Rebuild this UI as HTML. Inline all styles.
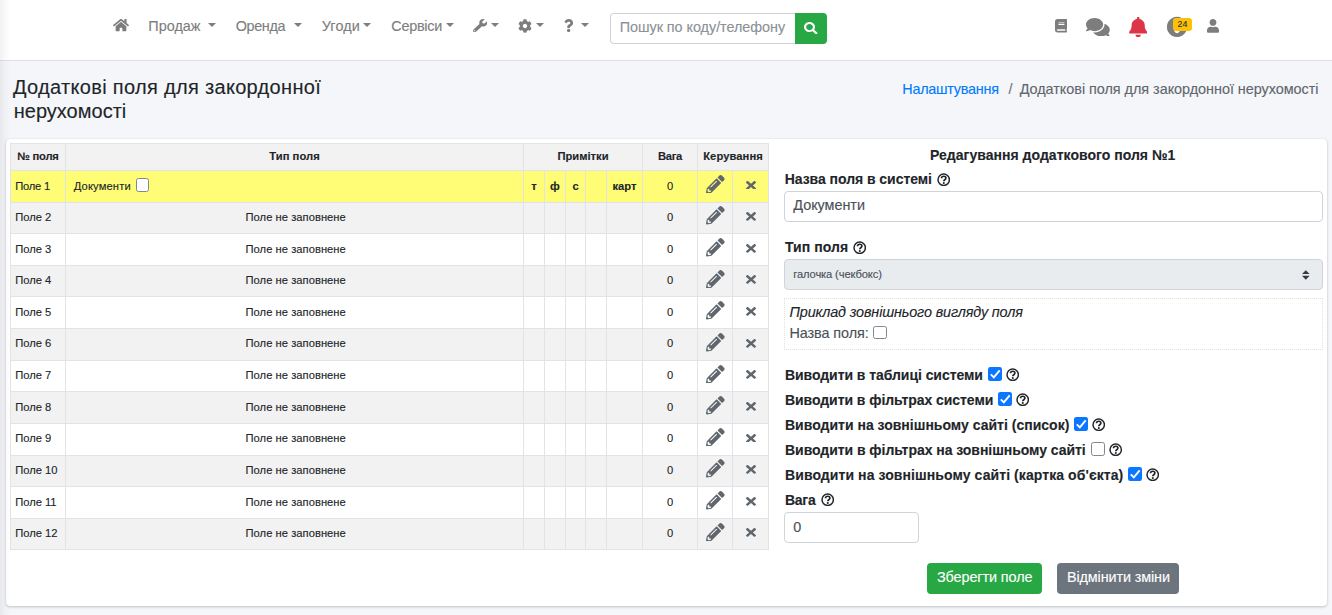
<!DOCTYPE html>
<html lang="uk">
<head>
<meta charset="utf-8">
<title>Додаткові поля для закордонної нерухомості</title>
<style>
*{box-sizing:border-box}
html,body{margin:0;padding:0}
body{width:1332px;height:615px;overflow:hidden;background:#f4f6f9;font-family:"Liberation Sans",Arial,sans-serif;font-size:14.4px;color:#212529;position:relative}
.abs{position:absolute}
.t{position:absolute;white-space:nowrap;color:#212529}
#nav{position:absolute;left:0;top:0;width:1332px;height:61px;background:#fff;border-bottom:1px solid #dee2e6}
#sideshadow{position:absolute;left:0;top:0;width:11px;height:615px;background:linear-gradient(to right,rgba(0,0,0,.055),rgba(0,0,0,.02) 50%,rgba(0,0,0,0));z-index:5}
.caret{position:absolute;width:0;height:0;border-left:4.200px solid transparent;border-right:4.200px solid transparent;margin-left:-.100px;border-top:4.200px solid #7d7d7d;top:23px}
#search{position:absolute;left:610px;top:13px;width:186px;height:31px;border:1px solid #ced4da;border-right:0;border-radius:4px 0 0 4px;background:#fff}
#sbtn{position:absolute;left:795px;top:13px;width:32px;height:31px;background:#28a745;border-radius:0 4px 4px 0}
.badge{left:1173.3px;top:17.9px;width:18.4px;height:12.9px;background:#ffc107;border-radius:3px}
#card{position:absolute;left:6px;top:139px;width:1321px;height:466.500px;background:#fff;border-radius:4px;box-shadow:0 0 1px rgba(0,0,0,.125),0 1px 3px rgba(0,0,0,.2)}
table{position:absolute;left:10px;top:143px;width:759px;border-collapse:collapse;table-layout:fixed;font-size:11.2px;color:#212529}
td,th{border:1px solid #e1e3e6;padding:0;height:31.640px;text-align:center;vertical-align:middle;overflow:hidden;white-space:nowrap;line-height:14px}
th{height:26.900px;background:#f2f2f2;font-weight:700}
tr.odd td{background:#f2f2f2}
tr.sel td{background:#fffd75}
td.l{text-align:left;padding-left:4.500px}
td span{position:relative;top:-.900px;left:1.200px}
td.l span{left:-.300px}
td span.z{left:0}
tr.sel td span{top:-.100px}
tr.sel td span.cb{top:-1px;left:.500px}
th span{position:relative;top:-.900px}
td.b{font-weight:700}
.cb{display:inline-block;width:13.400px;height:13.800px;border:1px solid #85858f;border-radius:2.500px;background:#fff;vertical-align:-2.300px;margin-left:4.500px;position:relative;top:-.800px}
.pc{display:block;margin:0 auto;position:relative;top:-2.100px;left:.300px}
.xc{display:block;margin:0 auto;position:relative;top:-1.200px}
.ckoff{border:1px solid #85858f;border-radius:2.500px;background:#fff}
.inp{position:absolute;left:784px;height:31px;border:1px solid #ced4da;border-radius:4px;background:#fff}
.dotted{left:784px;top:298px;width:539px;height:52px;border:1px dotted #e0e0e0}
.btn{position:absolute;top:563px;height:31px;border-radius:4px}
body{-webkit-text-stroke:.12px}
</style>
</head>
<body>
<div id="sideshadow"></div>
<div id="nav"></div>
<svg class="abs" style="left:113px;top:17.8px" width="16" height="14.2" viewBox="0 0 576 512" preserveAspectRatio="none"><path fill="#7d7d7d" d="M280.37 148.26L96 300.11V464a16 16 0 0 0 16 16l112.06-.29a16 16 0 0 0 15.92-16V368a16 16 0 0 1 16-16h64a16 16 0 0 1 16 16v95.64a16 16 0 0 0 16 16.05L464 480a16 16 0 0 0 16-16V300L295.67 148.26a12.19 12.19 0 0 0-15.3 0zM571.6 251.47L488 182.56V44.05a12 12 0 0 0-12-12h-56a12 12 0 0 0-12 12v72.61L318.47 43a48 48 0 0 0-61 0L4.34 251.47a12 12 0 0 0-1.6 16.9l25.5 31A12 12 0 0 0 45.15 301l235.22-193.74a12.19 12.19 0 0 1 15.3 0L530.9 301a12 12 0 0 0 16.9-1.6l25.5-31a12 12 0 0 0-1.7-16.93z"/></svg><span class="t" style="left:148.3px;top:15.81px;font-size:14.4px;line-height:20px;letter-spacing:0.021px;color:#7d7d7d;">Продаж</span><i class="caret" style="left:208.3px"></i><span class="t" style="left:235.8px;top:15.81px;font-size:14.4px;line-height:20px;letter-spacing:-0.376px;color:#7d7d7d;">Оренда</span><i class="caret" style="left:293.7px"></i><span class="t" style="left:321.8px;top:15.81px;font-size:14.4px;line-height:20px;letter-spacing:0.081px;color:#7d7d7d;">Угоди</span><i class="caret" style="left:363.5px"></i><span class="t" style="left:391.3px;top:15.81px;font-size:14.4px;line-height:20px;letter-spacing:-0.268px;color:#7d7d7d;">Сервіси</span><i class="caret" style="left:446.5px"></i><svg class="abs" style="left:473px;top:19.2px" width="14.2" height="13.3" viewBox="0 0 512 512" preserveAspectRatio="none"><path fill="#7d7d7d" d="M507.73 109.1c-2.24-9.03-13.54-12.09-20.12-5.51l-74.36 74.36-67.88-11.31-11.31-67.88 74.36-74.36c6.62-6.62 3.43-17.9-5.66-20.16-47.38-11.74-99.55.91-136.58 37.93-39.64 39.64-50.55 97.1-34.05 147.2L18.74 402.76c-24.99 24.99-24.99 65.51 0 90.5 24.99 24.99 65.51 24.99 90.5 0l213.21-213.21c50.12 16.71 107.47 5.68 147.37-34.22 37.07-37.07 49.7-89.32 37.91-136.73zM64 472c-13.25 0-24-10.75-24-24 0-13.26 10.75-24 24-24s24 10.74 24 24c0 13.25-10.75 24-24 24z"/></svg><i class="caret" style="left:491.1px"></i><svg class="abs" style="left:518px;top:18.9px" width="14" height="14" viewBox="0 0 512 512" preserveAspectRatio="none"><path fill="#7d7d7d" d="M487.4 315.7l-42.6-24.6c4.3-23.2 4.3-47 0-70.2l42.6-24.6c4.9-2.8 7.1-8.6 5.5-14-11.1-35.6-30-67.8-54.7-94.6-3.8-4.1-10-5.1-14.8-2.3L380.8 110c-17.9-15.400-38.500-27.300-60.800-35.100V25.800c0-5.600-3.900-10.500-9.400-11.700-36.700-8.200-74.300-7.800-109.200 0-5.500 1.200-9.400 6.100-9.400 11.700V75c-22.200 7.900-42.800 19.800-60.800 35.100L88.700 85.500c-4.900-2.800-11-1.900-14.800 2.300-24.700 26.700-43.600 58.900-54.700 94.600-1.700 5.400.6 11.200 5.500 14L67.300 221c-4.300 23.200-4.300 47 0 70.200l-42.600 24.600c-4.900 2.800-7.100 8.600-5.500 14 11.100 35.600 30 67.800 54.700 94.600 3.800 4.100 10 5.100 14.800 2.300l42.600-24.600c17.900 15.400 38.500 27.300 60.800 35.100v49.200c0 5.600 3.900 10.500 9.400 11.700 36.700 8.200 74.300 7.800 109.200 0 5.500-1.200 9.400-6.100 9.400-11.700v-49.200c22.200-7.900 42.800-19.800 60.800-35.100l42.600 24.600c4.900 2.800 11 1.900 14.800-2.300 24.700-26.700 43.600-58.900 54.700-94.600 1.500-5.500-.7-11.300-5.600-14.100zM256 336c-44.100 0-80-35.900-80-80s35.900-80 80-80 80 35.900 80 80-35.900 80-80 80z"/></svg><i class="caret" style="left:535.9px"></i><svg class="abs" style="left:563.7px;top:19.2px" width="9.3" height="13.3" viewBox="0 0 384 512" preserveAspectRatio="none"><path fill="#7d7d7d" d="M202.021 0C122.202 0 70.503 32.703 29.914 91.026c-7.363 10.58-5.093 25.086 5.178 32.874l43.138 32.709c10.373 7.865 25.132 6.026 33.253-4.148 25.049-31.381 43.630-49.449 82.757-49.449 30.764 0 68.816 19.799 68.816 49.631 0 22.552-18.617 34.134-48.993 51.164-35.423 19.860-82.299 44.576-82.299 106.405V320c0 13.255 10.745 24 24 24h72.471c13.255 0 24-10.745 24-24v-5.773c0-42.860 125.268-44.645 125.268-160.627C377.504 66.256 286.902 0 202.021 0zM192 373.459c-38.196 0-69.271 31.075-69.271 69.271 0 38.195 31.075 69.270 69.271 69.270s69.271-31.075 69.271-69.271-31.075-69.270-69.271-69.270z"/></svg><i class="caret" style="left:581.3px"></i><div id="search"></div><span class="t" style="left:619.7px;top:17.01px;font-size:14.4px;line-height:20px;letter-spacing:-0.036px;color:#8b9197;">Пошук по коду/телефону</span><div id="sbtn"></div><svg class="abs" style="left:804.2px;top:21.5px" width="13.6" height="12.4" viewBox="0 0 512 512" preserveAspectRatio="none"><path fill="#fff" d="M505 442.7L405.3 343c-4.5-4.5-10.600-7-17-7H372c27.600-35.300 44-79.700 44-128C416 93.100 322.900 0 208 0S0 93.100 0 208s93.100 208 208 208c48.300 0 92.700-16.400 128-44v16.300c0 6.400 2.500 12.500 7 17l99.700 99.700c9.400 9.400 24.600 9.400 33.900 0l28.300-28.300c9.400-9.400 9.400-24.600.1-34zM208 336c-70.700 0-128-57.200-128-128 0-70.700 57.200-128 128-128 70.700 0 128 57.200 128 128 0 70.700-57.200 128-128 128z"/></svg><svg class="abs" style="left:1054.8px;top:19px" width="12" height="13.5" viewBox="0 0 448 512" preserveAspectRatio="none"><path fill="#7d7d7d" d="M448 360V24c0-13.300-10.700-24-24-24H96C43 0 0 43 0 96v320c0 53 43 96 96 96h328c13.300 0 24-10.700 24-24v-16c0-7.500-3.500-14.300-8.900-18.700-4.200-15.400-4.200-59.300 0-74.700 5.400-4.300 8.900-11.100 8.900-18.600zM128 134c0-3.300 2.700-6 6-6h212c3.300 0 6 2.700 6 6v20c0 3.300-2.700 6-6 6H134c-3.300 0-6-2.700-6-6v-20zm0 64c0-3.300 2.700-6 6-6h212c3.300 0 6 2.700 6 6v20c0 3.300-2.700 6-6 6H134c-3.300 0-6-2.700-6-6v-20zm253.400 250H96c-17.700 0-32-14.300-32-32 0-17.600 14.400-32 32-32h285.400c-1.900 17.100-1.900 46.900 0 64z"/></svg><svg class="abs" style="left:1085.8px;top:17.9px" width="23.8" height="18.4" viewBox="0 32 576 448" preserveAspectRatio="none"><path fill="#7d7d7d" d="M416 192c0-88.400-93.100-160-208-160S0 103.600 0 192c0 34.300 14.100 65.900 38 92-13.400 30.200-35.500 54.200-35.800 54.500-2.200 2.300-2.800 5.700-1.500 8.700S4.800 352 8 352c36.600 0 66.900-12.300 88.700-25 32.200 15.700 70.300 25 111.300 25 114.900 0 208-71.600 208-160zm122 220c23.900-26 38-57.700 38-92 0-66.900-53.500-124.200-129.300-148.100.9 6.600 1.300 13.300 1.300 20.100 0 105.900-107.700 192-240 192-10.800 0-21.300-.8-31.700-1.900C207.800 439.600 281.800 480 368 480c41 0 79.100-9.200 111.300-25 21.800 12.700 52.100 25 88.700 25 3.200 0 6.100-1.900 7.300-4.800 1.300-2.900.7-6.300-1.500-8.700-.3-.3-22.400-24.200-35.800-54.500z"/></svg><svg class="abs" style="left:1128.75px;top:16.7px" width="18.35" height="20.4" viewBox="0 0 448 512" preserveAspectRatio="none"><path fill="#dc3545" d="M224 512c35.320 0 63.970-28.650 63.970-64H160.030c0 35.350 28.650 64 63.970 64zm215.390-149.710c-19.320-20.760-55.470-51.990-55.470-154.290 0-77.700-54.480-139.900-127.940-155.160V32c0-17.670-14.320-32-31.980-32s-31.980 14.330-31.980 32v20.840C118.560 68.100 64.080 130.300 64.080 208c0 102.300-36.150 133.530-55.470 154.290-6 6.450-8.660 14.160-8.610 21.710.11 16.400 12.980 32 32.100 32h383.800c19.120 0 32-15.600 32.100-32 .05-7.550-2.610-15.270-8.610-21.710z"/></svg><svg class="abs" style="left:1166px;top:16px" width="22" height="22" viewBox="0 0 22 22"><path fill="#7d7d7d" fill-rule="evenodd" d="M11 .8a10.100 10.100 0 1 0 .001 0zM11 11.800a2.700 2.700 0 1 0 .001 0z"/></svg><span class="abs badge"></span><span class="t" style="left:1177.5px;top:13.75px;font-size:8.8px;line-height:20px;color:#1f2d3d;">24</span><svg class="abs" style="left:1207px;top:19px" width="12" height="13.7" viewBox="0 0 448 512" preserveAspectRatio="none"><path fill="#7d7d7d" d="M224 256c70.700 0 128-57.300 128-128S294.700 0 224 0 96 57.300 96 128s57.300 128 128 128zm89.600 32h-16.700c-22.200 10.200-46.900 16-72.900 16s-50.600-5.800-72.900-16h-16.700C60.200 288 0 348.200 0 422.400V464c0 26.500 21.500 48 48 48h352c26.500 0 48-21.500 48-48v-41.600c0-74.200-60.200-134.400-134.400-134.400z"/></svg>
<span class="t" style="left:13px;top:74.82px;font-size:20px;line-height:24px;letter-spacing:0.315px;">Додаткові поля для закордонної</span><span class="t" style="left:13.75px;top:99.07px;font-size:20px;line-height:24px;letter-spacing:0.006px;">нерухомості</span>
<span class="t" style="left:902.3px;top:79.31px;font-size:14.4px;line-height:20px;letter-spacing:-0.257px;color:#007bff;">Налаштування</span><span class="t" style="left:1008.4px;top:79.31px;font-size:14.4px;line-height:20px;color:#6c757d;">/</span><span class="t" style="left:1019.7px;top:79.31px;font-size:14.4px;line-height:20px;letter-spacing:-0.023px;color:#60666c;">Додаткові поля для закордонної нерухомості</span>
<div id="card"></div>
<table>
<colgroup><col style="width:55px"><col style="width:458px"><col style="width:21px"><col style="width:21px"><col style="width:20px"><col style="width:21px"><col style="width:36px"><col style="width:55px"><col style="width:35px"><col style="width:36px"></colgroup>
<tr><th><span style="letter-spacing:-0.195px">№ поля</span></th><th><span style="letter-spacing:0.049px">Тип поля</span></th><th colspan="5"><span style="letter-spacing:-0.007px">Примітки</span></th><th><span style="letter-spacing:-0.27px">Вага</span></th><th colspan="2"><span style="letter-spacing:0.073px">Керування</span></th></tr>
<tr class="sel"><td class="l"><span style="letter-spacing:-0.228px">Поле 1</span></td><td class="l" style="padding-left:8px"><span style="letter-spacing:0.132px">Документи</span><span class="cb"></span></td><td class="b">т</td><td class="b">ф</td><td class="b">с</td><td></td><td class="b">карт</td><td><span class="z">0</span></td><td><svg class="pc" width="18.600" height="18.600" viewBox="0 0 512 512"><path fill="#60666d" d="M497.9 142.1l-46.1 46.1c-4.700 4.700-12.300 4.700-17 0l-111-111c-4.700-4.700-4.700-12.300 0-17l46.100-46.100c18.700-18.700 49.100-18.700 67.900 0l60.100 60.100c18.800 18.700 18.800 49.100 0 67.900zM284.200 99.800L21.600 362.400.4 483.900c-2.900 16.400 11.400 30.600 27.800 27.800l121.500-21.300 262.600-262.600c4.700-4.700 4.700-12.300 0-17l-111-111c-4.800-4.700-12.400-4.700-17.100 0zM124.100 339.900c-5.500-5.500-5.500-14.300 0-19.800l154-154c5.500-5.500 14.300-5.500 19.800 0s5.500 14.300 0 19.800l-154 154c-5.500 5.500-14.300 5.500-19.800 0zM88 424h48v36.300l-64.500 11.300-31.100-31.100L51.700 376H88v48z"/></svg></td><td><svg class="xc" width="10" height="8.800" viewBox="0 0 352 352" preserveAspectRatio="none"><path fill="#60666d" d="M242.720 176l100.070-100.070c12.280-12.280 12.280-32.190 0-44.480l-22.240-22.240c-12.280-12.280-32.190-12.280-44.480 0L176 109.280 75.930 9.210c-12.280-12.280-32.190-12.280-44.480 0L9.210 31.450c-12.280 12.280-12.280 32.190 0 44.480L109.280 176 9.210 276.070c-12.280 12.280-12.280 32.190 0 44.480l22.240 22.240c12.280 12.280 32.200 12.280 44.480 0L176 242.720l100.070 100.070c12.280 12.280 32.200 12.280 44.480 0l22.240-22.240c12.280-12.280 12.280-32.190 0-44.480L242.720 176z"/></svg></td></tr>
<tr class="odd"><td class="l"><span style="letter-spacing:-0.028px">Поле 2</span></td><td><span style="letter-spacing:0.033px">Поле не заповнене</span></td><td></td><td></td><td></td><td></td><td></td><td><span class="z">0</span></td><td><svg class="pc" width="18.600" height="18.600" viewBox="0 0 512 512"><path fill="#60666d" d="M497.9 142.1l-46.1 46.1c-4.700 4.700-12.300 4.700-17 0l-111-111c-4.700-4.700-4.700-12.300 0-17l46.100-46.100c18.700-18.700 49.100-18.700 67.900 0l60.100 60.100c18.800 18.700 18.800 49.100 0 67.900zM284.200 99.800L21.600 362.400.4 483.900c-2.900 16.400 11.400 30.600 27.800 27.800l121.500-21.300 262.600-262.600c4.700-4.700 4.700-12.300 0-17l-111-111c-4.800-4.700-12.400-4.700-17.100 0zM124.100 339.900c-5.500-5.500-5.500-14.300 0-19.800l154-154c5.500-5.500 14.300-5.500 19.800 0s5.500 14.300 0 19.800l-154 154c-5.500 5.500-14.300 5.500-19.800 0zM88 424h48v36.300l-64.500 11.300-31.100-31.100L51.700 376H88v48z"/></svg></td><td><svg class="xc" width="10" height="8.800" viewBox="0 0 352 352" preserveAspectRatio="none"><path fill="#60666d" d="M242.720 176l100.070-100.070c12.280-12.280 12.280-32.190 0-44.480l-22.240-22.240c-12.280-12.280-32.190-12.280-44.480 0L176 109.280 75.930 9.210c-12.280-12.280-32.190-12.280-44.480 0L9.210 31.450c-12.280 12.280-12.280 32.190 0 44.480L109.280 176 9.210 276.070c-12.280 12.280-12.280 32.190 0 44.480l22.240 22.240c12.280 12.280 32.200 12.280 44.480 0L176 242.720l100.070 100.070c12.280 12.280 32.200 12.280 44.480 0l22.240-22.240c12.280-12.280 12.280-32.190 0-44.480L242.720 176z"/></svg></td></tr>
<tr class=""><td class="l"><span style="letter-spacing:-0.028px">Поле 3</span></td><td><span style="letter-spacing:0.033px">Поле не заповнене</span></td><td></td><td></td><td></td><td></td><td></td><td><span class="z">0</span></td><td><svg class="pc" width="18.600" height="18.600" viewBox="0 0 512 512"><path fill="#60666d" d="M497.9 142.1l-46.1 46.1c-4.700 4.700-12.300 4.700-17 0l-111-111c-4.700-4.700-4.700-12.300 0-17l46.100-46.100c18.700-18.700 49.100-18.700 67.900 0l60.100 60.100c18.800 18.700 18.800 49.100 0 67.900zM284.200 99.800L21.600 362.400.4 483.900c-2.900 16.400 11.400 30.600 27.800 27.800l121.500-21.300 262.600-262.600c4.700-4.700 4.700-12.300 0-17l-111-111c-4.800-4.700-12.400-4.700-17.100 0zM124.100 339.900c-5.500-5.500-5.500-14.300 0-19.800l154-154c5.500-5.500 14.300-5.500 19.800 0s5.500 14.300 0 19.800l-154 154c-5.500 5.500-14.300 5.500-19.800 0zM88 424h48v36.300l-64.500 11.300-31.100-31.100L51.700 376H88v48z"/></svg></td><td><svg class="xc" width="10" height="8.800" viewBox="0 0 352 352" preserveAspectRatio="none"><path fill="#60666d" d="M242.720 176l100.070-100.070c12.280-12.280 12.280-32.190 0-44.480l-22.240-22.240c-12.280-12.280-32.190-12.280-44.480 0L176 109.280 75.930 9.210c-12.280-12.280-32.190-12.280-44.480 0L9.210 31.450c-12.280 12.280-12.280 32.190 0 44.480L109.280 176 9.210 276.070c-12.280 12.280-12.280 32.190 0 44.480l22.240 22.240c12.280 12.280 32.200 12.280 44.480 0L176 242.720l100.070 100.070c12.280 12.280 32.200 12.280 44.480 0l22.240-22.240c12.280-12.280 12.280-32.190 0-44.480L242.720 176z"/></svg></td></tr>
<tr class="odd"><td class="l"><span style="letter-spacing:-0.028px">Поле 4</span></td><td><span style="letter-spacing:0.033px">Поле не заповнене</span></td><td></td><td></td><td></td><td></td><td></td><td><span class="z">0</span></td><td><svg class="pc" width="18.600" height="18.600" viewBox="0 0 512 512"><path fill="#60666d" d="M497.9 142.1l-46.1 46.1c-4.700 4.700-12.300 4.700-17 0l-111-111c-4.700-4.700-4.700-12.300 0-17l46.100-46.100c18.700-18.700 49.100-18.700 67.900 0l60.100 60.100c18.800 18.700 18.800 49.100 0 67.900zM284.200 99.800L21.600 362.400.4 483.900c-2.900 16.400 11.400 30.600 27.800 27.800l121.500-21.300 262.600-262.600c4.700-4.700 4.700-12.300 0-17l-111-111c-4.800-4.700-12.400-4.700-17.100 0zM124.100 339.900c-5.500-5.500-5.500-14.300 0-19.800l154-154c5.500-5.500 14.300-5.500 19.800 0s5.500 14.300 0 19.800l-154 154c-5.500 5.500-14.300 5.500-19.800 0zM88 424h48v36.300l-64.500 11.300-31.100-31.100L51.700 376H88v48z"/></svg></td><td><svg class="xc" width="10" height="8.800" viewBox="0 0 352 352" preserveAspectRatio="none"><path fill="#60666d" d="M242.720 176l100.070-100.070c12.280-12.280 12.280-32.190 0-44.480l-22.240-22.240c-12.280-12.280-32.190-12.280-44.480 0L176 109.280 75.930 9.210c-12.280-12.280-32.190-12.280-44.480 0L9.210 31.450c-12.280 12.280-12.280 32.190 0 44.480L109.280 176 9.210 276.070c-12.280 12.280-12.280 32.190 0 44.480l22.240 22.240c12.280 12.280 32.200 12.280 44.480 0L176 242.720l100.070 100.070c12.280 12.280 32.200 12.280 44.480 0l22.240-22.240c12.280-12.280 12.280-32.190 0-44.480L242.720 176z"/></svg></td></tr>
<tr class=""><td class="l"><span style="letter-spacing:-0.028px">Поле 5</span></td><td><span style="letter-spacing:0.033px">Поле не заповнене</span></td><td></td><td></td><td></td><td></td><td></td><td><span class="z">0</span></td><td><svg class="pc" width="18.600" height="18.600" viewBox="0 0 512 512"><path fill="#60666d" d="M497.9 142.1l-46.1 46.1c-4.700 4.700-12.300 4.700-17 0l-111-111c-4.700-4.700-4.700-12.300 0-17l46.100-46.100c18.700-18.700 49.100-18.700 67.900 0l60.100 60.100c18.800 18.700 18.800 49.100 0 67.900zM284.200 99.800L21.600 362.400.4 483.900c-2.900 16.400 11.400 30.600 27.800 27.800l121.500-21.300 262.600-262.600c4.700-4.700 4.700-12.300 0-17l-111-111c-4.800-4.700-12.400-4.700-17.100 0zM124.100 339.900c-5.500-5.500-5.500-14.300 0-19.800l154-154c5.500-5.500 14.300-5.500 19.800 0s5.500 14.300 0 19.800l-154 154c-5.500 5.500-14.300 5.500-19.800 0zM88 424h48v36.300l-64.500 11.300-31.100-31.100L51.700 376H88v48z"/></svg></td><td><svg class="xc" width="10" height="8.800" viewBox="0 0 352 352" preserveAspectRatio="none"><path fill="#60666d" d="M242.720 176l100.070-100.070c12.280-12.280 12.280-32.190 0-44.480l-22.240-22.240c-12.280-12.280-32.190-12.280-44.480 0L176 109.280 75.930 9.210c-12.280-12.280-32.190-12.280-44.480 0L9.210 31.450c-12.280 12.280-12.280 32.190 0 44.480L109.280 176 9.210 276.070c-12.280 12.280-12.280 32.190 0 44.480l22.240 22.240c12.280 12.280 32.200 12.280 44.480 0L176 242.720l100.070 100.070c12.280 12.280 32.200 12.280 44.480 0l22.240-22.240c12.280-12.280 12.280-32.190 0-44.480L242.720 176z"/></svg></td></tr>
<tr class="odd"><td class="l"><span style="letter-spacing:-0.028px">Поле 6</span></td><td><span style="letter-spacing:0.033px">Поле не заповнене</span></td><td></td><td></td><td></td><td></td><td></td><td><span class="z">0</span></td><td><svg class="pc" width="18.600" height="18.600" viewBox="0 0 512 512"><path fill="#60666d" d="M497.9 142.1l-46.1 46.1c-4.700 4.700-12.300 4.700-17 0l-111-111c-4.700-4.700-4.700-12.300 0-17l46.100-46.100c18.700-18.700 49.100-18.700 67.900 0l60.100 60.100c18.800 18.700 18.800 49.100 0 67.900zM284.200 99.800L21.600 362.400.4 483.900c-2.900 16.400 11.400 30.600 27.800 27.800l121.500-21.300 262.600-262.600c4.700-4.700 4.700-12.300 0-17l-111-111c-4.800-4.700-12.400-4.700-17.100 0zM124.100 339.900c-5.500-5.500-5.500-14.300 0-19.800l154-154c5.500-5.500 14.300-5.500 19.800 0s5.500 14.300 0 19.800l-154 154c-5.500 5.500-14.300 5.500-19.800 0zM88 424h48v36.300l-64.500 11.300-31.100-31.100L51.700 376H88v48z"/></svg></td><td><svg class="xc" width="10" height="8.800" viewBox="0 0 352 352" preserveAspectRatio="none"><path fill="#60666d" d="M242.720 176l100.070-100.070c12.280-12.280 12.280-32.190 0-44.480l-22.240-22.240c-12.280-12.280-32.190-12.280-44.480 0L176 109.280 75.930 9.210c-12.280-12.280-32.190-12.280-44.480 0L9.210 31.450c-12.280 12.280-12.280 32.190 0 44.480L109.280 176 9.210 276.070c-12.280 12.280-12.280 32.190 0 44.480l22.240 22.240c12.280 12.280 32.200 12.280 44.480 0L176 242.720l100.070 100.070c12.280 12.280 32.200 12.280 44.480 0l22.240-22.240c12.280-12.280 12.280-32.190 0-44.480L242.720 176z"/></svg></td></tr>
<tr class=""><td class="l"><span style="letter-spacing:-0.028px">Поле 7</span></td><td><span style="letter-spacing:0.033px">Поле не заповнене</span></td><td></td><td></td><td></td><td></td><td></td><td><span class="z">0</span></td><td><svg class="pc" width="18.600" height="18.600" viewBox="0 0 512 512"><path fill="#60666d" d="M497.9 142.1l-46.1 46.1c-4.700 4.700-12.300 4.700-17 0l-111-111c-4.700-4.700-4.700-12.300 0-17l46.100-46.100c18.700-18.700 49.100-18.700 67.900 0l60.100 60.100c18.800 18.700 18.800 49.100 0 67.900zM284.200 99.800L21.600 362.400.4 483.900c-2.900 16.400 11.400 30.600 27.800 27.800l121.500-21.300 262.600-262.600c4.700-4.700 4.700-12.300 0-17l-111-111c-4.800-4.700-12.400-4.700-17.100 0zM124.100 339.900c-5.500-5.500-5.500-14.300 0-19.800l154-154c5.500-5.500 14.300-5.500 19.800 0s5.500 14.300 0 19.800l-154 154c-5.500 5.500-14.300 5.500-19.800 0zM88 424h48v36.300l-64.500 11.300-31.100-31.100L51.700 376H88v48z"/></svg></td><td><svg class="xc" width="10" height="8.800" viewBox="0 0 352 352" preserveAspectRatio="none"><path fill="#60666d" d="M242.720 176l100.070-100.070c12.280-12.280 12.280-32.190 0-44.480l-22.240-22.240c-12.280-12.280-32.190-12.280-44.480 0L176 109.280 75.930 9.210c-12.280-12.280-32.190-12.280-44.480 0L9.210 31.450c-12.280 12.280-12.280 32.190 0 44.480L109.280 176 9.210 276.070c-12.280 12.280-12.280 32.190 0 44.480l22.240 22.240c12.280 12.280 32.200 12.280 44.480 0L176 242.720l100.070 100.070c12.280 12.280 32.200 12.280 44.480 0l22.240-22.240c12.280-12.280 12.280-32.190 0-44.480L242.720 176z"/></svg></td></tr>
<tr class="odd"><td class="l"><span style="letter-spacing:-0.028px">Поле 8</span></td><td><span style="letter-spacing:0.033px">Поле не заповнене</span></td><td></td><td></td><td></td><td></td><td></td><td><span class="z">0</span></td><td><svg class="pc" width="18.600" height="18.600" viewBox="0 0 512 512"><path fill="#60666d" d="M497.9 142.1l-46.1 46.1c-4.700 4.700-12.300 4.700-17 0l-111-111c-4.700-4.700-4.700-12.300 0-17l46.100-46.100c18.700-18.700 49.100-18.700 67.900 0l60.100 60.100c18.800 18.700 18.800 49.100 0 67.900zM284.200 99.800L21.600 362.400.4 483.900c-2.900 16.400 11.400 30.600 27.800 27.800l121.500-21.300 262.600-262.600c4.700-4.700 4.700-12.300 0-17l-111-111c-4.800-4.700-12.400-4.700-17.100 0zM124.100 339.900c-5.500-5.500-5.500-14.300 0-19.800l154-154c5.500-5.500 14.300-5.500 19.800 0s5.500 14.300 0 19.800l-154 154c-5.500 5.500-14.300 5.500-19.800 0zM88 424h48v36.300l-64.500 11.300-31.100-31.100L51.700 376H88v48z"/></svg></td><td><svg class="xc" width="10" height="8.800" viewBox="0 0 352 352" preserveAspectRatio="none"><path fill="#60666d" d="M242.720 176l100.070-100.070c12.280-12.280 12.280-32.190 0-44.480l-22.240-22.240c-12.280-12.280-32.190-12.280-44.480 0L176 109.280 75.930 9.210c-12.280-12.280-32.190-12.280-44.480 0L9.210 31.450c-12.280 12.280-12.280 32.190 0 44.480L109.280 176 9.210 276.070c-12.280 12.280-12.280 32.190 0 44.480l22.240 22.240c12.280 12.280 32.200 12.280 44.480 0L176 242.720l100.070 100.070c12.280 12.280 32.200 12.280 44.480 0l22.240-22.240c12.280-12.280 12.280-32.190 0-44.480L242.720 176z"/></svg></td></tr>
<tr class=""><td class="l"><span style="letter-spacing:-0.028px">Поле 9</span></td><td><span style="letter-spacing:0.033px">Поле не заповнене</span></td><td></td><td></td><td></td><td></td><td></td><td><span class="z">0</span></td><td><svg class="pc" width="18.600" height="18.600" viewBox="0 0 512 512"><path fill="#60666d" d="M497.9 142.1l-46.1 46.1c-4.700 4.700-12.300 4.700-17 0l-111-111c-4.700-4.700-4.700-12.300 0-17l46.100-46.100c18.700-18.700 49.100-18.700 67.900 0l60.100 60.100c18.800 18.700 18.800 49.100 0 67.900zM284.200 99.800L21.600 362.400.4 483.900c-2.900 16.400 11.400 30.600 27.800 27.800l121.500-21.300 262.600-262.600c4.700-4.700 4.700-12.300 0-17l-111-111c-4.800-4.700-12.400-4.700-17.100 0zM124.100 339.900c-5.500-5.500-5.500-14.300 0-19.800l154-154c5.500-5.500 14.300-5.500 19.800 0s5.500 14.300 0 19.800l-154 154c-5.500 5.500-14.300 5.500-19.800 0zM88 424h48v36.300l-64.500 11.300-31.100-31.100L51.700 376H88v48z"/></svg></td><td><svg class="xc" width="10" height="8.800" viewBox="0 0 352 352" preserveAspectRatio="none"><path fill="#60666d" d="M242.720 176l100.070-100.070c12.280-12.280 12.280-32.190 0-44.480l-22.240-22.240c-12.280-12.280-32.190-12.280-44.480 0L176 109.280 75.930 9.210c-12.280-12.280-32.190-12.280-44.480 0L9.210 31.450c-12.280 12.280-12.280 32.190 0 44.480L109.280 176 9.210 276.070c-12.280 12.280-12.280 32.190 0 44.480l22.240 22.240c12.280 12.280 32.200 12.280 44.480 0L176 242.720l100.070 100.070c12.280 12.280 32.200 12.280 44.480 0l22.240-22.240c12.280-12.280 12.280-32.190 0-44.480L242.720 176z"/></svg></td></tr>
<tr class="odd"><td class="l"><span style="letter-spacing:-0.028px">Поле 10</span></td><td><span style="letter-spacing:0.033px">Поле не заповнене</span></td><td></td><td></td><td></td><td></td><td></td><td><span class="z">0</span></td><td><svg class="pc" width="18.600" height="18.600" viewBox="0 0 512 512"><path fill="#60666d" d="M497.9 142.1l-46.1 46.1c-4.700 4.700-12.300 4.700-17 0l-111-111c-4.700-4.700-4.700-12.300 0-17l46.100-46.100c18.700-18.700 49.100-18.700 67.900 0l60.100 60.100c18.800 18.700 18.800 49.100 0 67.900zM284.200 99.800L21.600 362.400.4 483.900c-2.900 16.400 11.400 30.600 27.800 27.800l121.500-21.300 262.600-262.600c4.700-4.700 4.700-12.300 0-17l-111-111c-4.800-4.700-12.400-4.700-17.100 0zM124.100 339.900c-5.500-5.500-5.500-14.300 0-19.800l154-154c5.500-5.500 14.300-5.500 19.800 0s5.500 14.300 0 19.800l-154 154c-5.500 5.500-14.300 5.500-19.800 0zM88 424h48v36.300l-64.500 11.300-31.100-31.100L51.700 376H88v48z"/></svg></td><td><svg class="xc" width="10" height="8.800" viewBox="0 0 352 352" preserveAspectRatio="none"><path fill="#60666d" d="M242.720 176l100.070-100.070c12.280-12.280 12.280-32.190 0-44.480l-22.240-22.240c-12.280-12.280-32.190-12.280-44.480 0L176 109.280 75.930 9.210c-12.280-12.280-32.190-12.280-44.480 0L9.210 31.450c-12.280 12.280-12.280 32.190 0 44.480L109.280 176 9.210 276.070c-12.280 12.280-12.280 32.190 0 44.480l22.240 22.240c12.280 12.280 32.200 12.280 44.480 0L176 242.720l100.070 100.070c12.280 12.280 32.200 12.280 44.480 0l22.240-22.240c12.280-12.280 12.280-32.190 0-44.480L242.720 176z"/></svg></td></tr>
<tr class=""><td class="l"><span style="letter-spacing:-0.028px">Поле 11</span></td><td><span style="letter-spacing:0.033px">Поле не заповнене</span></td><td></td><td></td><td></td><td></td><td></td><td><span class="z">0</span></td><td><svg class="pc" width="18.600" height="18.600" viewBox="0 0 512 512"><path fill="#60666d" d="M497.9 142.1l-46.1 46.1c-4.700 4.700-12.300 4.700-17 0l-111-111c-4.700-4.700-4.700-12.300 0-17l46.100-46.100c18.700-18.700 49.100-18.700 67.900 0l60.100 60.100c18.800 18.700 18.800 49.100 0 67.900zM284.200 99.800L21.600 362.400.4 483.900c-2.900 16.400 11.400 30.600 27.800 27.800l121.500-21.300 262.600-262.600c4.700-4.700 4.700-12.300 0-17l-111-111c-4.800-4.700-12.400-4.700-17.100 0zM124.100 339.900c-5.500-5.500-5.500-14.300 0-19.800l154-154c5.500-5.500 14.300-5.500 19.800 0s5.500 14.300 0 19.800l-154 154c-5.500 5.500-14.300 5.500-19.800 0zM88 424h48v36.300l-64.500 11.300-31.100-31.100L51.700 376H88v48z"/></svg></td><td><svg class="xc" width="10" height="8.800" viewBox="0 0 352 352" preserveAspectRatio="none"><path fill="#60666d" d="M242.720 176l100.070-100.070c12.280-12.280 12.280-32.190 0-44.480l-22.240-22.240c-12.280-12.280-32.190-12.280-44.480 0L176 109.280 75.930 9.210c-12.280-12.280-32.190-12.280-44.480 0L9.210 31.450c-12.280 12.280-12.280 32.190 0 44.480L109.280 176 9.210 276.070c-12.280 12.280-12.280 32.190 0 44.480l22.240 22.240c12.280 12.280 32.200 12.280 44.480 0L176 242.720l100.070 100.070c12.280 12.280 32.200 12.280 44.480 0l22.240-22.240c12.280-12.280 12.280-32.190 0-44.480L242.720 176z"/></svg></td></tr>
<tr class="odd"><td class="l"><span style="letter-spacing:-0.028px">Поле 12</span></td><td><span style="letter-spacing:0.033px">Поле не заповнене</span></td><td></td><td></td><td></td><td></td><td></td><td><span class="z">0</span></td><td><svg class="pc" width="18.600" height="18.600" viewBox="0 0 512 512"><path fill="#60666d" d="M497.9 142.1l-46.1 46.1c-4.700 4.700-12.300 4.700-17 0l-111-111c-4.700-4.700-4.700-12.300 0-17l46.100-46.100c18.700-18.700 49.100-18.700 67.900 0l60.100 60.100c18.800 18.700 18.800 49.100 0 67.900zM284.200 99.800L21.600 362.400.4 483.900c-2.900 16.400 11.400 30.600 27.800 27.800l121.500-21.300 262.600-262.600c4.700-4.700 4.700-12.300 0-17l-111-111c-4.800-4.700-12.400-4.700-17.100 0zM124.100 339.900c-5.500-5.500-5.500-14.300 0-19.800l154-154c5.500-5.500 14.300-5.500 19.800 0s5.500 14.300 0 19.800l-154 154c-5.500 5.500-14.300 5.500-19.800 0zM88 424h48v36.300l-64.500 11.300-31.100-31.100L51.700 376H88v48z"/></svg></td><td><svg class="xc" width="10" height="8.800" viewBox="0 0 352 352" preserveAspectRatio="none"><path fill="#60666d" d="M242.720 176l100.070-100.070c12.280-12.280 12.280-32.190 0-44.480l-22.240-22.240c-12.280-12.280-32.190-12.280-44.480 0L176 109.280 75.930 9.210c-12.280-12.280-32.190-12.280-44.480 0L9.210 31.450c-12.280 12.280-12.280 32.190 0 44.480L109.280 176 9.210 276.070c-12.280 12.280-12.280 32.190 0 44.480l22.240 22.240c12.280 12.280 32.200 12.280 44.480 0L176 242.720l100.070 100.070c12.280 12.280 32.200 12.280 44.480 0l22.240-22.240c12.280-12.280 12.280-32.190 0-44.480L242.720 176z"/></svg></td></tr>
</table>
<span class="t" style="left:930px;top:145.15px;font-size:14px;line-height:20px;letter-spacing:0.031px;font-weight:700;">Редагування додаткового поля №1</span><span class="t" style="left:784.7px;top:169.35px;font-size:14px;line-height:20px;letter-spacing:-0.043px;font-weight:700;">Назва поля в системі</span><svg class="abs" style="left:937px;top:172.8px" width="13.400" height="13.400" viewBox="0 0 14 14"><circle cx="7" cy="7" r="5.950" fill="none" stroke="#212529" stroke-width="1.550"/><path d="M4.700 5.500c.1-1.400 1.050-2.100 2.350-2.100 1.300 0 2.250.8 2.250 1.950 0 1.650-2.200 1.650-2.200 3.150" fill="none" stroke="#212529" stroke-width="1.750"/><circle cx="7.100" cy="10.450" r="1.080" fill="#212529"/></svg><div class="inp" style="top:191px;width:539px"></div><span class="t" style="left:793.3px;top:195.01px;font-size:14.4px;line-height:20px;letter-spacing:-0.028px;color:#495057;">Документи</span><span class="t" style="left:785px;top:237.15px;font-size:14px;line-height:20px;letter-spacing:0.08px;font-weight:700;">Тип поля</span><svg class="abs" style="left:853px;top:241px" width="13.400" height="13.400" viewBox="0 0 14 14"><circle cx="7" cy="7" r="5.950" fill="none" stroke="#212529" stroke-width="1.550"/><path d="M4.700 5.500c.1-1.400 1.050-2.100 2.350-2.100 1.300 0 2.250.8 2.250 1.950 0 1.650-2.200 1.650-2.200 3.150" fill="none" stroke="#212529" stroke-width="1.750"/><circle cx="7.100" cy="10.450" r="1.080" fill="#212529"/></svg><div class="inp" style="top:259px;width:539px;height:31px;background:#e9ecef"></div><span class="t" style="left:793.25px;top:263.62px;font-size:11.2px;line-height:20px;letter-spacing:-0.139px;color:#495057;">галочка (чекбокс)</span><svg class="abs" style="left:1302.200px;top:270.200px" width="7.600" height="9.800" viewBox="0 0 8 10"><path d="M4 0l4 4.100H0zM4 10L0 5.900h8z" fill="#343a40"/></svg><div class="abs dotted"></div><span class="t" style="left:789.5px;top:302.01px;font-size:14.4px;line-height:20px;letter-spacing:-0.134px;font-style:italic;">Приклад зовнішнього вигляду поля</span><span class="t" style="left:789.5px;top:323.01px;font-size:14.4px;line-height:20px;letter-spacing:-0.079px;color:#495057;">Назва поля:</span><span class="abs ckoff" style="left:873.3px;top:326.2px;width:13.4px;height:12.6px"></span><span class="t" style="left:785px;top:365.15px;font-size:14px;line-height:20px;letter-spacing:-0.055px;font-weight:700;">Виводити в таблиці системи</span><svg class="abs" style="left:988.0px;top:367px" width="14" height="14" viewBox="0 0 14 14"><rect width="14" height="14" rx="2.300" fill="#0b76ff"/><path d="M2.800 7.300l3.050 3.100 5.800-7.100" fill="none" stroke="#fff" stroke-width="1.900"/></svg><svg class="abs" style="left:1006px;top:367.9px" width="13.400" height="13.400" viewBox="0 0 14 14"><circle cx="7" cy="7" r="5.950" fill="none" stroke="#212529" stroke-width="1.550"/><path d="M4.700 5.500c.1-1.400 1.050-2.100 2.350-2.100 1.300 0 2.250.8 2.250 1.950 0 1.650-2.200 1.650-2.200 3.150" fill="none" stroke="#212529" stroke-width="1.750"/><circle cx="7.100" cy="10.450" r="1.080" fill="#212529"/></svg><span class="t" style="left:785px;top:390.15px;font-size:14px;line-height:20px;letter-spacing:-0.055px;font-weight:700;">Виводити в фільтрах системи</span><svg class="abs" style="left:998.0px;top:392px" width="14" height="14" viewBox="0 0 14 14"><rect width="14" height="14" rx="2.300" fill="#0b76ff"/><path d="M2.800 7.300l3.050 3.100 5.800-7.100" fill="none" stroke="#fff" stroke-width="1.900"/></svg><svg class="abs" style="left:1016px;top:392.9px" width="13.400" height="13.400" viewBox="0 0 14 14"><circle cx="7" cy="7" r="5.950" fill="none" stroke="#212529" stroke-width="1.550"/><path d="M4.700 5.500c.1-1.400 1.050-2.100 2.350-2.100 1.300 0 2.250.8 2.250 1.950 0 1.650-2.200 1.650-2.200 3.150" fill="none" stroke="#212529" stroke-width="1.750"/><circle cx="7.100" cy="10.450" r="1.080" fill="#212529"/></svg><span class="t" style="left:785px;top:415.15px;font-size:14px;line-height:20px;letter-spacing:0.007px;font-weight:700;">Виводити на зовнішньому сайті (список)</span><svg class="abs" style="left:1073.7px;top:417px" width="14" height="14" viewBox="0 0 14 14"><rect width="14" height="14" rx="2.300" fill="#0b76ff"/><path d="M2.800 7.300l3.050 3.100 5.800-7.100" fill="none" stroke="#fff" stroke-width="1.900"/></svg><svg class="abs" style="left:1091.7px;top:417.9px" width="13.400" height="13.400" viewBox="0 0 14 14"><circle cx="7" cy="7" r="5.950" fill="none" stroke="#212529" stroke-width="1.550"/><path d="M4.700 5.500c.1-1.400 1.050-2.100 2.350-2.100 1.300 0 2.250.8 2.250 1.950 0 1.650-2.200 1.650-2.200 3.150" fill="none" stroke="#212529" stroke-width="1.750"/><circle cx="7.100" cy="10.450" r="1.080" fill="#212529"/></svg><span class="t" style="left:785px;top:440.15px;font-size:14px;line-height:20px;letter-spacing:-0.044px;font-weight:700;">Виводити в фільтрах на зовнішньому сайті</span><span class="abs ckoff" style="left:1091.0px;top:442px;width:14px;height:14px"></span><svg class="abs" style="left:1109.3px;top:442.9px" width="13.400" height="13.400" viewBox="0 0 14 14"><circle cx="7" cy="7" r="5.950" fill="none" stroke="#212529" stroke-width="1.550"/><path d="M4.700 5.500c.1-1.400 1.050-2.100 2.350-2.100 1.300 0 2.250.8 2.250 1.950 0 1.650-2.200 1.650-2.200 3.150" fill="none" stroke="#212529" stroke-width="1.750"/><circle cx="7.100" cy="10.450" r="1.080" fill="#212529"/></svg><span class="t" style="left:785px;top:465.15px;font-size:14px;line-height:20px;letter-spacing:0.085px;font-weight:700;">Виводити на зовнішньому сайті (картка об'єкта)</span><svg class="abs" style="left:1128.0px;top:467px" width="14" height="14" viewBox="0 0 14 14"><rect width="14" height="14" rx="2.300" fill="#0b76ff"/><path d="M2.800 7.300l3.050 3.100 5.800-7.100" fill="none" stroke="#fff" stroke-width="1.900"/></svg><svg class="abs" style="left:1146px;top:467.9px" width="13.400" height="13.400" viewBox="0 0 14 14"><circle cx="7" cy="7" r="5.950" fill="none" stroke="#212529" stroke-width="1.550"/><path d="M4.700 5.500c.1-1.400 1.050-2.100 2.350-2.100 1.300 0 2.250.8 2.250 1.950 0 1.650-2.200 1.650-2.200 3.150" fill="none" stroke="#212529" stroke-width="1.750"/><circle cx="7.100" cy="10.450" r="1.080" fill="#212529"/></svg><span class="t" style="left:785px;top:489.65px;font-size:14px;line-height:20px;letter-spacing:-0.271px;font-weight:700;">Вага</span><svg class="abs" style="left:820.7px;top:492.5px" width="13.400" height="13.400" viewBox="0 0 14 14"><circle cx="7" cy="7" r="5.950" fill="none" stroke="#212529" stroke-width="1.550"/><path d="M4.700 5.500c.1-1.400 1.050-2.100 2.350-2.100 1.300 0 2.250.8 2.250 1.950 0 1.650-2.200 1.650-2.200 3.150" fill="none" stroke="#212529" stroke-width="1.750"/><circle cx="7.100" cy="10.450" r="1.080" fill="#212529"/></svg><div class="inp" style="top:512px;width:135px"></div><span class="t" style="left:793.3px;top:516.71px;font-size:14.4px;line-height:20px;color:#495057;">0</span><div class="btn" style="left:927px;width:115px;background:#28a745"></div><span class="t" style="left:937px;top:567.01px;font-size:14.4px;line-height:20px;letter-spacing:-0.092px;color:#fff;">Зберегти поле</span><div class="btn" style="left:1057px;width:122px;background:#6c757d"></div><span class="t" style="left:1067px;top:567.01px;font-size:14.4px;line-height:20px;letter-spacing:-0.117px;color:#fff;">Відмінити зміни</span>
</body>
</html>
